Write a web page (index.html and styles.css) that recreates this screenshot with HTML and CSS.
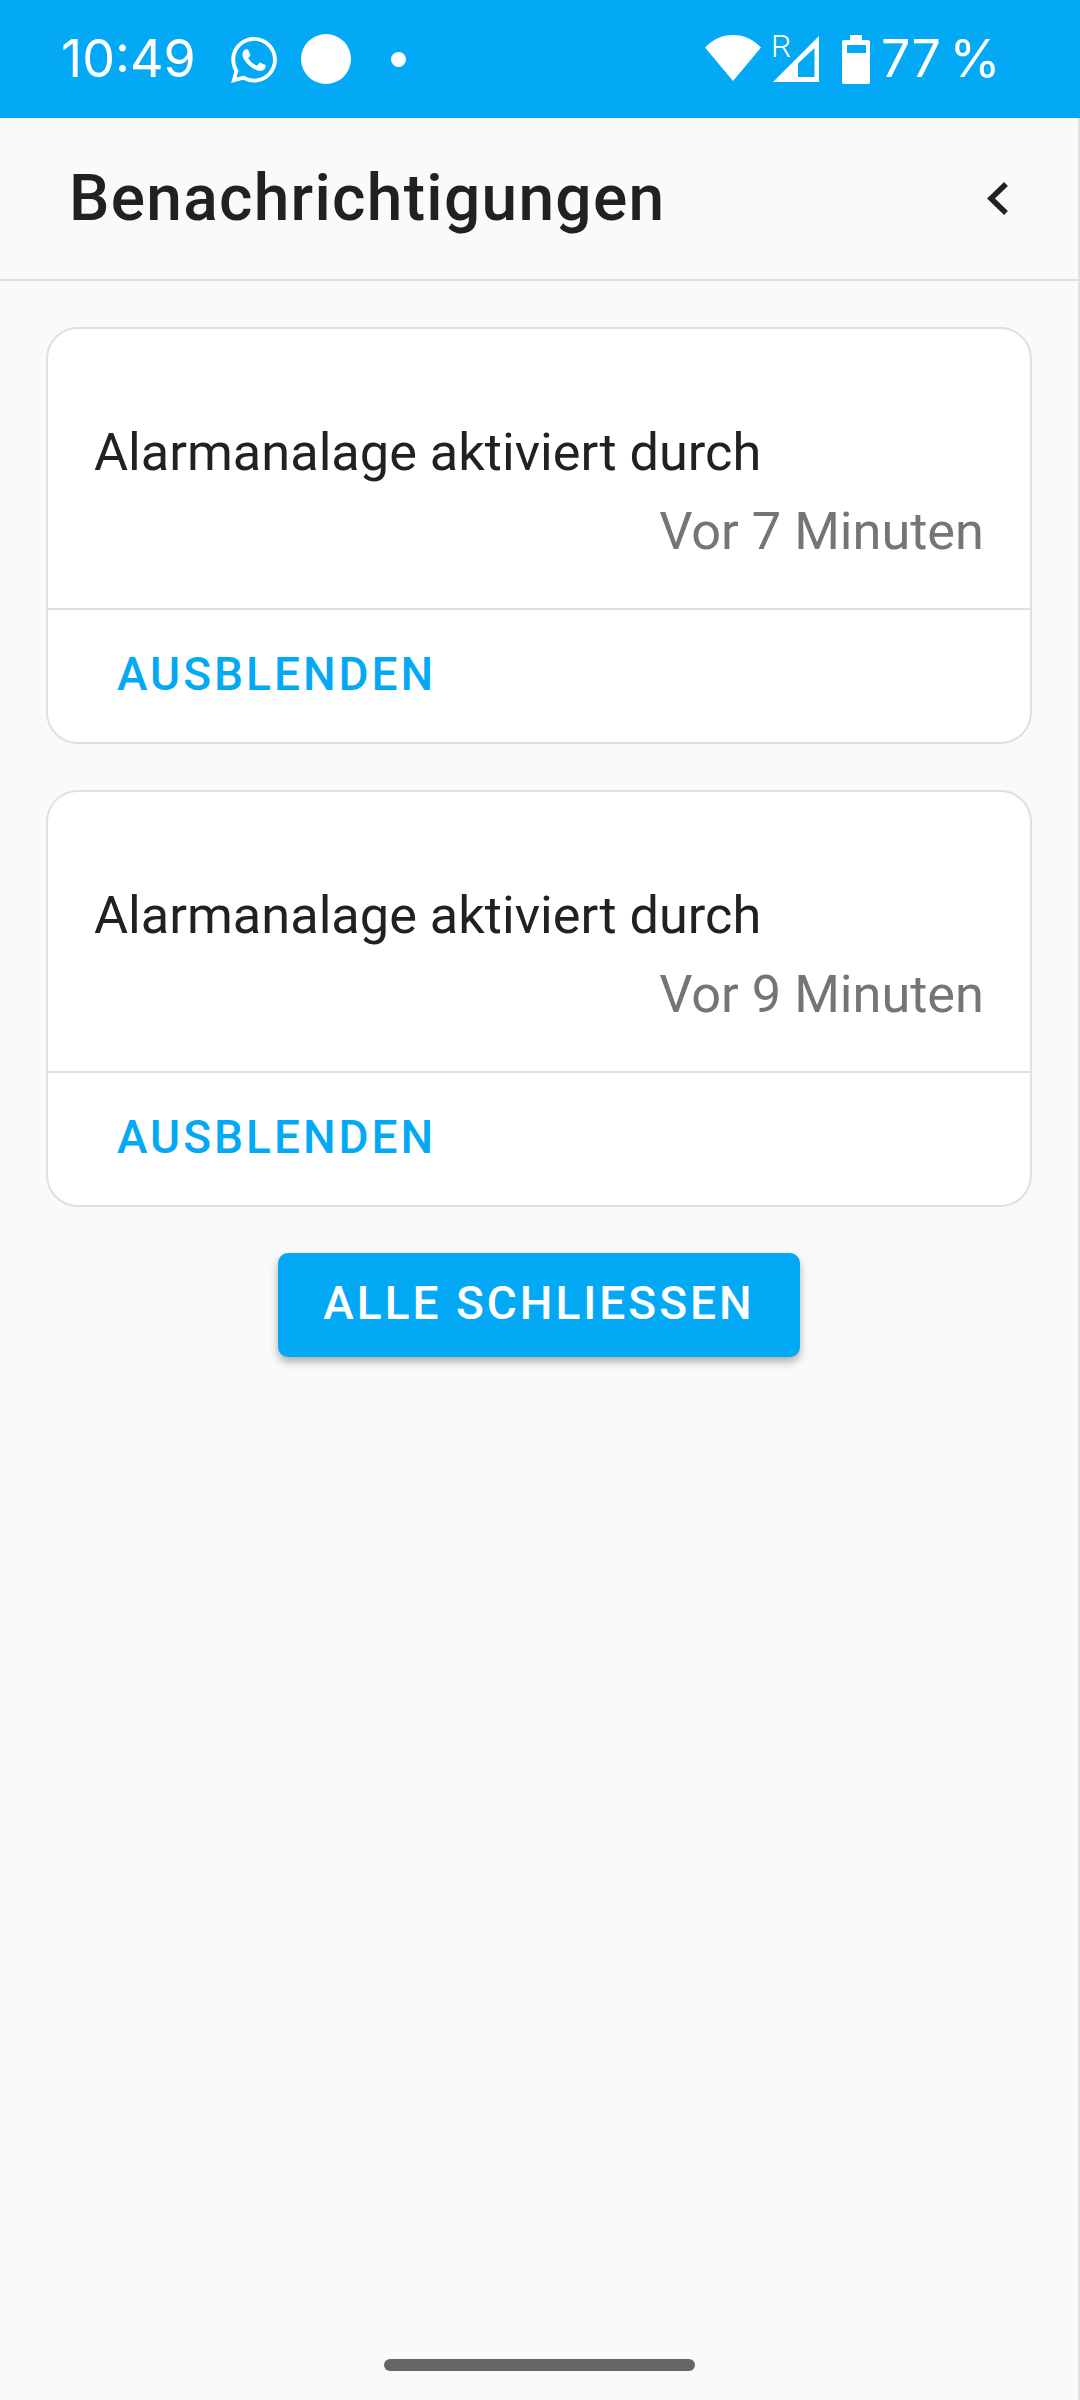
FILE: index.html
```html
<!doctype html>
<html lang="de">
<head>
<meta charset="utf-8">
<meta name="viewport" content="width=device-width, initial-scale=1.0">
<link rel="stylesheet" href="styles.css">
<title>Benachrichtigungen</title>
</head>
<body>
<div class="status-bar">
    <div class="status-left">
        <span class="clock">10:49</span>
        <svg class="icon-whatsapp" viewBox="0 0 24 24"><path d="M17.472 14.382c-.297-.149-1.758-.867-2.03-.967-.273-.099-.471-.148-.67.15-.197.297-.767.966-.94 1.164-.173.199-.347.223-.644.075-.297-.15-1.255-.463-2.39-1.475-.883-.788-1.48-1.761-1.653-2.059-.173-.297-.018-.458.13-.606.134-.133.298-.347.446-.52.149-.174.198-.298.298-.497.099-.198.05-.371-.025-.52-.075-.149-.669-1.612-.916-2.207-.242-.579-.487-.5-.669-.51-.173-.008-.371-.01-.57-.01-.198 0-.52.074-.792.372-.272.297-1.04 1.016-1.04 2.479 0 1.462 1.065 2.875 1.213 3.074.149.198 2.096 3.2 5.077 4.487.709.306 1.262.489 1.694.625.712.227 1.36.195 1.871.118.571-.085 1.758-.719 2.006-1.413.248-.694.248-1.289.173-1.413-.074-.124-.272-.198-.57-.347m-5.421 7.403h-.004a9.87 9.87 0 01-5.031-1.378l-.361-.214-3.741.982.998-3.648-.235-.374a9.86 9.86 0 01-1.51-5.26c.001-5.45 4.436-9.884 9.888-9.884 2.64 0 5.122 1.03 6.988 2.898a9.825 9.825 0 012.893 6.994c-.003 5.45-4.437 9.884-9.885 9.884m8.413-18.297A11.815 11.815 0 0012.05 0C5.495 0 .16 5.335.157 11.892c0 2.096.547 4.142 1.588 5.945L.057 24l6.305-1.654a11.882 11.882 0 005.683 1.448h.005c6.554 0 11.89-5.335 11.893-11.893a11.821 11.821 0 00-3.48-8.413z"/></svg>
        <span class="notif-circle"></span>
        <span class="notif-dot"></span>
    </div>
    <div class="status-right">
        <svg class="icon-wifi" viewBox="0 0 56 46"><path d="M0 12.500C7.500 4.500 17 0 28 0s20.500 4.500 28 12.500L28 46z"/></svg>
        <div class="signal">
            <span class="roaming">R</span>
            <svg class="icon-signal" viewBox="0 0 46 46"><path fill-rule="evenodd" d="M46 0V46H0zM41.500 12 25 27.500V41H41.500z"/></svg>
        </div>
        <svg class="icon-battery" viewBox="0 0 28 49"><path fill-rule="evenodd" d="M8 0H20V5H26Q28 5 28 7V47Q28 49 26 49H2Q0 49 0 47V7Q0 5 2 5H8zM5 10V18H24V10z"/></svg>
        <span class="battery-level">77 %</span>
    </div>
</div>

<div class="page">
    <header class="app-header">
        <h1>Benachrichtigungen</h1>
        <svg class="icon-back" viewBox="0 0 21 33"><path d="M19 2 4 16.500 19 31"/></svg>
    </header>

    <main class="content">
        <section class="card">
            <div class="card-body">
                <p class="message">Alarmanalage aktiviert durch</p>
                <p class="time">Vor 7 Minuten</p>
            </div>
            <div class="card-actions"><a class="hide-link">AUSBLENDEN</a></div>
        </section>
        <section class="card">
            <div class="card-body">
                <p class="message">Alarmanalage aktiviert durch</p>
                <p class="time">Vor 9 Minuten</p>
            </div>
            <div class="card-actions"><a class="hide-link">AUSBLENDEN</a></div>
        </section>
        <button class="close-all">ALLE SCHLIESSEN</button>
    </main>

    <div class="home-bar"></div>
</div>
</body>
</html>
```

FILE: styles.css
```css
* {
    box-sizing: border-box;
}
h1,
p {
    margin: 0;
    padding: 0;
}
body {
    margin: 0;
    height: 2400px;
    display: flex;
    flex-direction: column;
    font-family: Roboto, "Liberation Sans", sans-serif;
    color: #212121;
    background-color: #fafafa;
    overflow: hidden;
}

/* status bar */
.status-bar {
    height: 118px;
    flex: none;
    display: flex;
    align-items: center;
    justify-content: space-between;
    padding: 0 83px 0 61px;
    background-color: #03a9f4;
    color: #fff;
}
.status-left,
.status-right {
    display: flex;
    align-items: center;
}
.status-bar svg {
    display: block;
    fill: #fff;
}
.clock {
    width: 132px;
    font-family: Inter, sans-serif;
    font-size: 52px;
    font-weight: 400;
    line-height: 60px;
    white-space: nowrap;
}
.icon-whatsapp {
    width: 46px;
    height: 46px;
    margin: 2px 0 0 38px;
}
.notif-circle {
    width: 50px;
    height: 50px;
    margin-left: 24px;
    border-radius: 50%;
    background-color: #fff;
}
.notif-dot {
    width: 15px;
    height: 15px;
    margin-left: 40px;
    border-radius: 50%;
    background-color: #fff;
}
.icon-wifi {
    width: 56px;
    height: 46px;
    margin-top: -2px;
}
.signal {
    position: relative;
    width: 46px;
    height: 46px;
    margin-left: 12px;
}
.roaming {
    position: absolute;
    left: -2px;
    top: -6px;
    font-size: 32px;
    line-height: 33px;
    font-weight: 300;
}
.icon-signal {
    width: 46px;
    height: 46px;
}
.icon-battery {
    width: 28px;
    height: 49px;
    margin-left: 23px;
}
.battery-level {
    width: 116px;
    margin-left: 11px;
    font-family: Inter, sans-serif;
    font-size: 52px;
    font-weight: 400;
    line-height: 60px;
    word-spacing: -6px;
    white-space: nowrap;
}

/* page */
.page {
    flex: 1;
    display: flex;
    flex-direction: column;
    border-right: 2px solid #e0e0e0;
}
.app-header {
    height: 163px;
    flex: none;
    display: flex;
    align-items: center;
    justify-content: space-between;
    padding: 0 70px 0 69px;
    border-bottom: 2px solid #e0e0e0;
}
.app-header h1 {
    font-size: 64px;
    line-height: 80px;
    font-weight: 500;
    letter-spacing: 1.3px;
}
.icon-back {
    width: 21px;
    height: 33px;
    overflow: visible;
    fill: none;
    stroke: #212121;
    stroke-width: 5.500;
}
.content {
    display: flex;
    flex-direction: column;
    gap: 46px;
    padding: 46px 46px 0 46px;
}
.card {
    height: 417px;
    border: 2px solid #e0e0e0;
    border-radius: 32px;
    background-color: #fff;
}
.card-body {
    height: 281px;
    padding: 84px 46px 0 46px;
    border-bottom: 2px solid #e0e0e0;
}
.message,
.time {
    font-size: 52.300px;
    line-height: 79px;
}
.time {
    color: #757575;
    text-align: right;
}
.card-actions {
    padding: 37px 0 0 69px;
}
.hide-link {
    font-size: 46px;
    line-height: 54px;
    font-weight: 500;
    letter-spacing: 3px;
    color: #03a9f4;
}
.close-all {
    align-self: center;
    width: 522px;
    height: 104px;
    padding: 0 0 4px;
    border: 0;
    border-radius: 10px;
    background-color: #03a9f4;
    color: #fff;
    font-family: Roboto, sans-serif;
    font-size: 46px;
    font-weight: 500;
    letter-spacing: 3px;
    box-shadow: 0 5px 8px rgba(0, 0, 0, 0.3);
}
.home-bar {
    width: 311px;
    height: 12px;
    flex: none;
    align-self: center;
    margin: auto 0 29px 1px;
    border-radius: 6px;
    background-color: #666;
}
```
